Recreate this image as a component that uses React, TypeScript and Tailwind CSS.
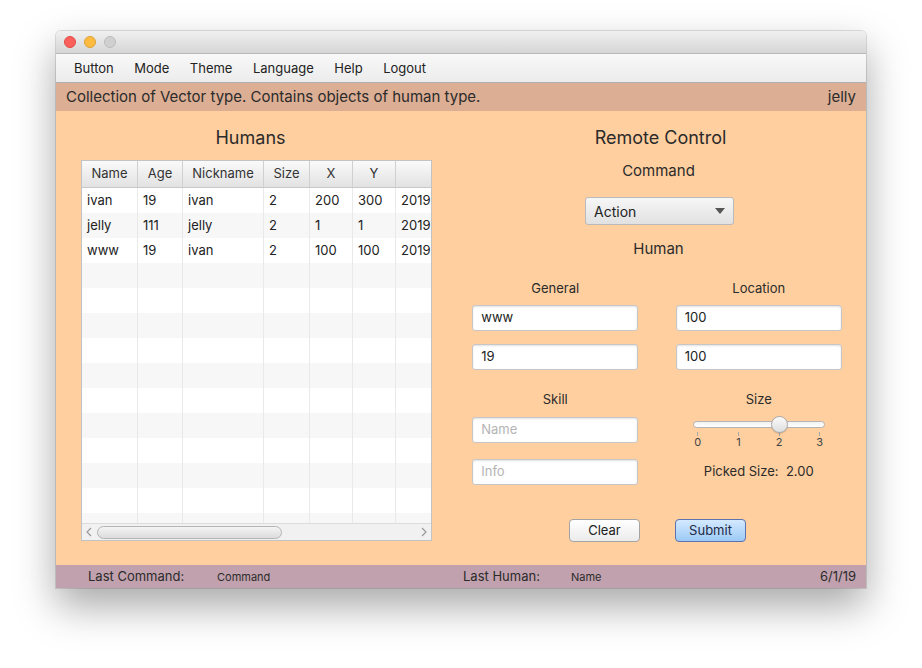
import React from 'react';

const font = { fontFamily: 'Inter, "Liberation Sans", Arial, sans-serif' };

const columns = [
  { title: 'Name', w: 'w-[56px]' },
  { title: 'Age', w: 'w-[45px]' },
  { title: 'Nickname', w: 'w-[81px]' },
  { title: 'Size', w: 'w-[46px]' },
  { title: 'X', w: 'w-[43px]' },
  { title: 'Y', w: 'w-[43px]' },
  { title: '', w: 'w-[40px]' },
];

const humans = [
  ['ivan', '19', 'ivan', '2', '200', '300', '2019'],
  ['jelly', '111', 'jelly', '2', '1', '1', '2019'],
  ['www', '19', 'ivan', '2', '100', '100', '2019'],
];

const menu = ['Button', 'Mode', 'Theme', 'Language', 'Help', 'Logout'];

function HumansTable() {
  const rows: string[][] = [...humans];
  while (rows.length < 14) rows.push(['', '', '', '', '', '', '']);

  return (
    <div className="w-[351px] h-[381px] border border-[#c3c3c3] bg-white flex flex-col overflow-hidden">
      <div className="flex h-[27px] shrink-0 bg-gradient-to-b from-[#fafafa] to-[#e2e2e2] border-b border-[#c8c8c8]">
        {columns.map((c, i) => (
          <div
            key={i}
            className={`${c.w} shrink-0 border-r border-[#d0d0d0] flex items-center justify-center text-[13px] text-[#333]`}
          >
            {c.title}
          </div>
        ))}
      </div>
      <div className="flex-1 overflow-hidden">
        {rows.map((r, i) => (
          <div key={i} className={`flex h-[25px] ${i % 2 === 1 ? 'bg-[#f7f7f7]' : 'bg-white'}`}>
            {r.map((cell, j) => (
              <div
                key={j}
                className={`${columns[j].w} shrink-0 border-r border-[#e9e9e9] flex items-center pl-[5px] text-[13px] text-[#222] overflow-hidden whitespace-nowrap`}
              >
                {cell}
              </div>
            ))}
          </div>
        ))}
      </div>
      <div className="h-[17px] shrink-0 bg-[#f1f1f1] border-t border-[#dcdcdc] flex items-center px-[3px] gap-[4px]">
        <svg width="8" height="10" viewBox="0 0 8 10">
          <path d="M6 1 L2 5 L6 9" fill="none" stroke="#9a9a9a" strokeWidth="1.2" />
        </svg>
        <div className="w-[185px] h-[13px] rounded-full border border-[#b5b5b5] bg-gradient-to-b from-[#f4f4f4] to-[#dcdcdc]" />
        <div className="flex-1" />
        <svg width="8" height="10" viewBox="0 0 8 10">
          <path d="M2 1 L6 5 L2 9" fill="none" stroke="#9a9a9a" strokeWidth="1.2" />
        </svg>
      </div>
    </div>
  );
}

function TextField({ value, placeholder }: { value?: string; placeholder?: string }) {
  return (
    <div className="w-[166px] h-[26px] bg-white border border-[#c6c6c6] rounded-[3px] shadow-[inset_0_1px_2px_rgba(0,0,0,0.12)] flex items-center px-[8px] text-[13px]">
      {value ? (
        <span className="text-[#222]">{value}</span>
      ) : (
        <span className="text-[#b4b4b4]">{placeholder}</span>
      )}
    </div>
  );
}

function SizeSlider() {
  const ticks = ['0', '1', '2', '3'];
  return (
    <div className="w-[132px] flex flex-col">
      <div className="relative h-[16px] flex items-center">
        <div className="w-full h-[7px] rounded-full border border-[#b4b4b4] bg-gradient-to-b from-[#f2f2f2] to-[#ffffff]" />
        <div className="absolute left-[78px] top-0 w-[17px] h-[17px] rounded-full border border-[#a9a9a9] bg-gradient-to-b from-[#fbfbfb] to-[#dedede] shadow-[0_1px_1px_rgba(0,0,0,0.15)]" />
      </div>
      <div className="flex justify-between px-[2px]">
        {ticks.map((t) => (
          <div key={t} className="flex flex-col items-center w-[6px]">
            <div className="w-px h-[4px] bg-[#a8a8a8]" />
            <span className="text-[11px] text-[#444] leading-[12px]">{t}</span>
          </div>
        ))}
      </div>
    </div>
  );
}

export default function App() {
  return (
    <div className="min-h-screen bg-white pt-[31px] pl-[56px]" style={font}>
      <div className="w-[810px] h-[557px] rounded-t-[5px] flex flex-col overflow-hidden shadow-[0_18px_40px_rgba(0,0,0,0.35),0_0_0_1px_rgba(0,0,0,0.12)]">
        {/* title bar */}
        <div className="h-[22px] shrink-0 bg-gradient-to-b from-[#f0f0f0] to-[#d6d6d6] flex items-center gap-[8px] pl-[8px]">
          <div className="w-[12px] h-[12px] rounded-full bg-[#fc605c] border border-[#de4a45]" />
          <div className="w-[12px] h-[12px] rounded-full bg-[#fdbc40] border border-[#dea034]" />
          <div className="w-[12px] h-[12px] rounded-full bg-[#d0d0d0] border border-[#bcbcbc]" />
        </div>
        {/* menu bar */}
        <div className="h-[30px] shrink-0 border-t border-[#b8b8b8] border-b border-b-[#b0b0b0] bg-gradient-to-b from-[#f8f8f8] to-[#ececec] flex items-center pl-[18px] pt-[2px] gap-[20.5px] text-[13px] text-[#222]">
          {menu.map((m) => (
            <span key={m}>{m}</span>
          ))}
        </div>
        {/* header */}
        <div className="h-[28px] shrink-0 bg-[#dcae94] flex items-center justify-between px-[10px] text-[15px] text-[#2b2b2b]">
          <span>Collection of Vector type. Contains objects of human type.</span>
          <span>jelly</span>
        </div>
        {/* main */}
        <div className="flex-1 bg-[#ffcf9f] flex">
          <div className="w-[393px] flex flex-col items-start pl-[25px] pt-[16px]">
            <div className="w-[351px] pr-[12px] text-center text-[18px] leading-[22px] text-[#2b2b2b]">Humans</div>
            <div className="mt-[11px]">
              <HumansTable />
            </div>
          </div>
          <div className="flex-1 flex flex-col items-center pt-[16px] text-[#2b2b2b]">
            <div className="text-[18px] leading-[22px] pl-[6px]">Remote Control</div>
            <div className="text-[15px] leading-[18px] mt-[13px] pl-[2px]">Command</div>
            <div className="mt-[17px] ml-[4px] w-[149px] h-[28px] rounded-[3px] border border-[#bababa] bg-gradient-to-b from-[#f7f7f7] to-[#e1e1e1] flex items-center justify-between px-[8px] text-[14px] text-[#222]">
              <span>Action</span>
              <svg width="10" height="6" viewBox="0 0 10 6">
                <path d="M0 0 L10 0 L5 6 Z" fill="#555" />
              </svg>
            </div>
            <div className="text-[15px] leading-[18px] mt-[15px] pl-[2px]">Human</div>
            <div className="grid grid-cols-2 gap-x-[38px] w-[370px] mt-[22px] pr-[1px]">
              <div className="flex flex-col items-center">
                <div className="text-[13px] leading-[16px]">General</div>
                <div className="mt-[9px] flex flex-col gap-[13px]">
                  <TextField value="www" />
                  <TextField value="19" />
                </div>
                <div className="text-[13px] leading-[16px] mt-[21px]">Skill</div>
                <div className="mt-[10px] flex flex-col gap-[16px]">
                  <TextField placeholder="Name" />
                  <TextField placeholder="Info" />
                </div>
              </div>
              <div className="flex flex-col items-center">
                <div className="text-[13px] leading-[16px]">Location</div>
                <div className="mt-[9px] flex flex-col gap-[13px]">
                  <TextField value="100" />
                  <TextField value="100" />
                </div>
                <div className="text-[13px] leading-[16px] mt-[21px]">Size</div>
                <div className="mt-[9px]">
                  <SizeSlider />
                </div>
                <div className="text-[13px] leading-[16px] mt-[15px]">Picked Size:&nbsp; 2.00</div>
              </div>
            </div>
            <div className="flex gap-[35px] mt-[34px]">
              <button className="w-[71px] h-[23px] rounded-[4px] border border-[#a4a4a4] bg-gradient-to-b from-[#ffffff] to-[#ebebeb] text-[13px] text-[#222]">
                Clear
              </button>
              <button className="w-[71px] h-[23px] rounded-[4px] border border-[#5b74b0] bg-gradient-to-b from-[#d4e9ff] to-[#9ccaf6] text-[13px] text-[#1f2a44]">
                Submit
              </button>
            </div>
          </div>
        </div>
        {/* footer */}
        <div className="h-[23px] shrink-0 bg-[#c1a1ad] flex items-center pl-[32px] pr-[10px] pt-[1px] text-[#2b2b2b]">
          <span className="w-[129px] text-[13px]">Last Command:</span>
          <span className="w-[246px] text-[11px]">Command</span>
          <span className="w-[108px] text-[13px]">Last Human:</span>
          <span className="flex-1 text-[11px]">Name</span>
          <span className="text-[13px]">6/1/19</span>
        </div>
      </div>
    </div>
  );
}
